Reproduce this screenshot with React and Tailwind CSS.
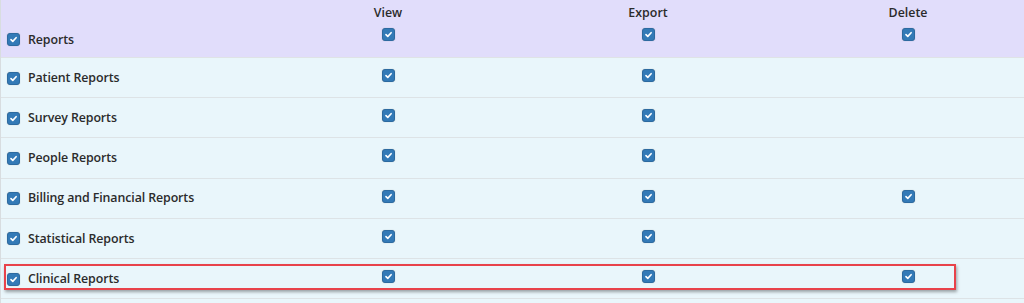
import React from "react";

function Check() {
  return (
    <span className="inline-flex w-[13px] h-[13px] rounded-[3px] bg-[#337ab7] border border-[#2c6aa0] items-center justify-center shadow-[0_0_1px_rgba(0,0,0,0.3)]">
      <svg width="9" height="9" viewBox="0 0 10 10">
        <path d="M2.2 5.2 L4.2 7.1 L7.9 3" fill="none" stroke="#fff" strokeWidth="1.8" strokeLinecap="round" strokeLinejoin="round" />
      </svg>
    </span>
  );
}

const rows = [
  { name: "Patient Reports", v: true, e: true, d: false },
  { name: "Survey Reports", v: true, e: true, d: false },
  { name: "People Reports", v: true, e: true, d: false },
  { name: "Billing and Financial Reports", v: true, e: true, d: true },
  { name: "Statistical Reports", v: true, e: true, d: false },
  { name: "Clinical Reports", v: true, e: true, d: true, hl: true },
];

export default function App() {
  return (
    <div
      className="w-[1024px] h-[303px] overflow-hidden bg-[#e9f6fb] text-[#2b2b2b] border-l border-[#d8dde0]"
      style={{ fontFamily: '"Open Sans", sans-serif' }}
    >
      <div className="grid grid-cols-[257px_260px_260px_260px] h-[58px] bg-[#e1ddfb] border-b border-[#dfe3e6]">
        <div className="flex items-end pb-[11px] pl-[6px] gap-[8px]">
          <Check />
          <span className="text-[12.4px] font-semibold leading-none tracking-[-0.1px]">Reports</span>
        </div>
        {["View", "Export", "Delete"].map((h) => (
          <div key={h} className="flex flex-col items-center pt-[5px]">
            <span className="text-[12.4px] font-semibold leading-[16px]">{h}</span>
            <span className="mt-[7px] flex"><Check /></span>
          </div>
        ))}
      </div>
      {rows.map((r) => (
        <div key={r.name} className="relative grid grid-cols-[257px_260px_260px_260px] h-[40.2px] border-b border-[#dde3e6]">
          {r.hl && (
            <div className="absolute left-[3px] top-[5px] w-[952px] h-[26px] border-2 border-[#e8424a] shadow-[1px_2px_3px_rgba(0,0,0,0.35)]" />
          )}
          <div className="flex items-center pl-[6px] gap-[8px] pt-[1px]">
            <Check />
            <span className="text-[12.4px] font-semibold leading-none tracking-[-0.1px]">{r.name}</span>
          </div>
          <div className="flex justify-center pt-[11px]">{r.v && <span className="flex"><Check /></span>}</div>
          <div className="flex justify-center pt-[11px]">{r.e && <span className="flex"><Check /></span>}</div>
          <div className="flex justify-center pt-[11px]">{r.d && <span className="flex"><Check /></span>}</div>
        </div>
      ))}
    </div>
  );
}
